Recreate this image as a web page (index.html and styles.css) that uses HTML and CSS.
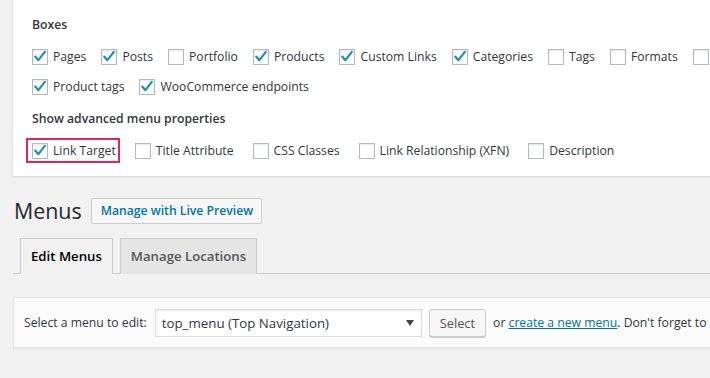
FILE: index.html
```html
<!DOCTYPE html>
<html>
<head>
<meta charset="utf-8">
<link rel="stylesheet" href="styles.css">
</head>
<body>
<div class="screen-options">
  <div class="legend">Boxes</div>
  <div class="row row-boxes">
    <label class="opt"><span class="cb on"><svg viewBox="0 0 16 16"><path d="M3.2 7.6 L6.4 11.2 L12.8 2.8"/></svg></span>Pages</label>
    <label class="opt"><span class="cb on"><svg viewBox="0 0 16 16"><path d="M3.2 7.6 L6.4 11.2 L12.8 2.8"/></svg></span>Posts</label>
    <label class="opt"><span class="cb"></span>Portfolio</label>
    <label class="opt"><span class="cb on"><svg viewBox="0 0 16 16"><path d="M3.2 7.6 L6.4 11.2 L12.8 2.8"/></svg></span>Products</label>
    <label class="opt"><span class="cb on"><svg viewBox="0 0 16 16"><path d="M3.2 7.6 L6.4 11.2 L12.8 2.8"/></svg></span>Custom Links</label>
    <label class="opt"><span class="cb on"><svg viewBox="0 0 16 16"><path d="M3.2 7.6 L6.4 11.2 L12.8 2.8"/></svg></span>Categories</label>
    <label class="opt"><span class="cb"></span>Tags</label>
    <label class="opt"><span class="cb"></span>Formats</label>
    <label class="opt"><span class="cb"></span></label>
  </div>
  <div class="row row-boxes">
    <label class="opt"><span class="cb on"><svg viewBox="0 0 16 16"><path d="M3.2 7.6 L6.4 11.2 L12.8 2.8"/></svg></span>Product tags</label>
    <label class="opt"><span class="cb on"><svg viewBox="0 0 16 16"><path d="M3.2 7.6 L6.4 11.2 L12.8 2.8"/></svg></span>WooCommerce endpoints</label>
  </div>
  <div class="legend second">Show advanced menu properties</div>
  <div class="row row-adv">
    <label class="opt highlight"><span class="cb on"><svg viewBox="0 0 16 16"><path d="M3.2 7.6 L6.4 11.2 L12.8 2.8"/></svg></span>Link Target</label>
    <label class="opt"><span class="cb"></span>Title Attribute</label>
    <label class="opt"><span class="cb"></span>CSS Classes</label>
    <label class="opt"><span class="cb"></span>Link Relationship (XFN)</label>
    <label class="opt"><span class="cb"></span>Description</label>
  </div>
</div>

<div class="wrap">
  <div class="title-row">
    <h1 class="title">Menus</h1>
    <a class="page-btn">Manage with Live Preview</a>
  </div>
  <div class="tabs">
    <span class="tab active">Edit Menus</span>
    <span class="tab">Manage Locations</span>
  </div>
  <div class="manage-menus">
    <span class="select-label">Select a menu to edit:</span>
    <div class="select-box"><span>top_menu (Top Navigation)</span><svg class="arrow" viewBox="0 0 8 8"><path d="M0 1 L8 1 L4 7 Z"/></svg></div>
    <span class="btn">Select</span>
    <span class="tail">or <a class="link">create a new menu</a>. Don't forget to</span>
  </div>
</div>
</body>
</html>
```

FILE: styles.css
```css
html, body {
  margin: 0;
  padding: 0;
}
body {
  background: #f1f1f1;
  font-family: "Open Sans", "Noto Sans", sans-serif;
  font-size: 12.2px;
  color: #32373c;
  width: 710px;
  height: 378px;
  overflow: hidden;
}
.screen-options {
  margin-left: 12px;
  width: 900px;
  height: 177px;
  box-sizing: border-box;
  background: #fff;
  border-left: 1px solid #e5e5e5;
  border-bottom: 1px solid #e1e1e1;
  box-shadow: 0 1px 1px rgba(0,0,0,.04);
  padding: 15px 0 0 19px;
}
.legend {
  font-weight: 600;
  line-height: 20px;
  height: 20px;
  color: #32373c;
}
.legend.second {
  margin-top: 7px;
}
.row {
  display: flex;
  align-items: center;
  height: 30px;
  white-space: nowrap;
}
.legend + .row {
  margin-top: 7px;
}
.row-boxes {
  gap: 15px;
}
.row-adv {
  gap: 19px;
}
.opt {
  display: flex;
  align-items: center;
  gap: 5px;
  line-height: 18px;
  color: #32373c;
}
.cb {
  width: 16px;
  height: 16px;
  box-sizing: border-box;
  border: 1px solid #b4b9be;
  background: #fff;
  box-shadow: inset 0 1px 2px rgba(0,0,0,.1);
  flex: none;
  position: relative;
}
.cb svg {
  position: absolute;
  left: -1px;
  top: -1px;
  width: 16px;
  height: 16px;
}
.cb svg path {
  fill: none;
  stroke: #1e8cbe;
  stroke-width: 2.2;
  stroke-linecap: round;
  stroke-linejoin: round;
}
.highlight {
  position: relative;
}
.highlight::after {
  content: "";
  position: absolute;
  left: -6px;
  right: -4px;
  top: -4px;
  bottom: -3px;
  border: 2px solid #e2255c;
}

.wrap {
  margin-left: 13px;
}
.title-row {
  display: flex;
  align-items: center;
  margin-top: 21px;
  height: 26px;
}
.title {
  margin: 0;
  font-size: 21.4px;
  font-weight: 400;
  line-height: 26px;
  color: #23282d;
  padding-left: 1px;
}
.page-btn {
  margin-left: 9px;
  height: 26px;
  box-sizing: border-box;
  padding: 0 8px 0 9px;
  border: 1px solid #ccc;
  border-radius: 2px;
  background: #f7f7f7;
  color: #0073aa;
  font-weight: 600;
  line-height: 24px;
}
.tabs {
  margin-top: 14px;
  display: flex;
  gap: 7px;
  padding-left: 7px;
  border-bottom: 1px solid #ccc;
  height: 35px;
}
.tab {
  height: 36px;
  box-sizing: border-box;
  border: 1px solid #ccc;
  border-bottom: 0;
  padding: 0 10px;
  font-size: 13.2px;
  font-weight: 600;
  line-height: 35px;
  background: #e5e5e5;
  color: #555;
}
.tab.active {
  background: #f1f1f1;
  color: #000;
}
.manage-menus {
  margin-top: 23px;
  width: 900px;
  height: 51px;
  box-sizing: border-box;
  background: #fbfbfb;
  border: 1px solid #e5e5e5;
  box-shadow: 0 1px 1px rgba(0,0,0,.04);
  display: flex;
  align-items: center;
  padding-left: 10px;
  white-space: nowrap;
}
.select-label {
  color: #32373c;
}
.select-box {
  margin-left: 8px;
  width: 267px;
  height: 28px;
  box-sizing: border-box;
  border: 1px solid #ddd;
  background: #fff;
  box-shadow: inset 0 1px 2px rgba(0,0,0,.07);
  display: flex;
  align-items: center;
  justify-content: space-between;
  padding: 0 7px 0 6px;
  font-size: 13.3px;
  color: #32373c;
}
.arrow {
  width: 8px;
  height: 8px;
  fill: #444;
}
.btn {
  margin-left: 7px;
  height: 28px;
  box-sizing: border-box;
  padding: 0 10px;
  border: 1px solid #ccc;
  border-radius: 3px;
  background: #f7f7f7;
  box-shadow: 0 1px 0 #ccc;
  color: #555;
  font-size: 12.8px;
  line-height: 26px;
}
.tail {
  margin-left: 7px;
  font-size: 12.2px;
  color: #32373c;
}
.link {
  color: #0073aa;
  text-decoration: underline;
}
```
